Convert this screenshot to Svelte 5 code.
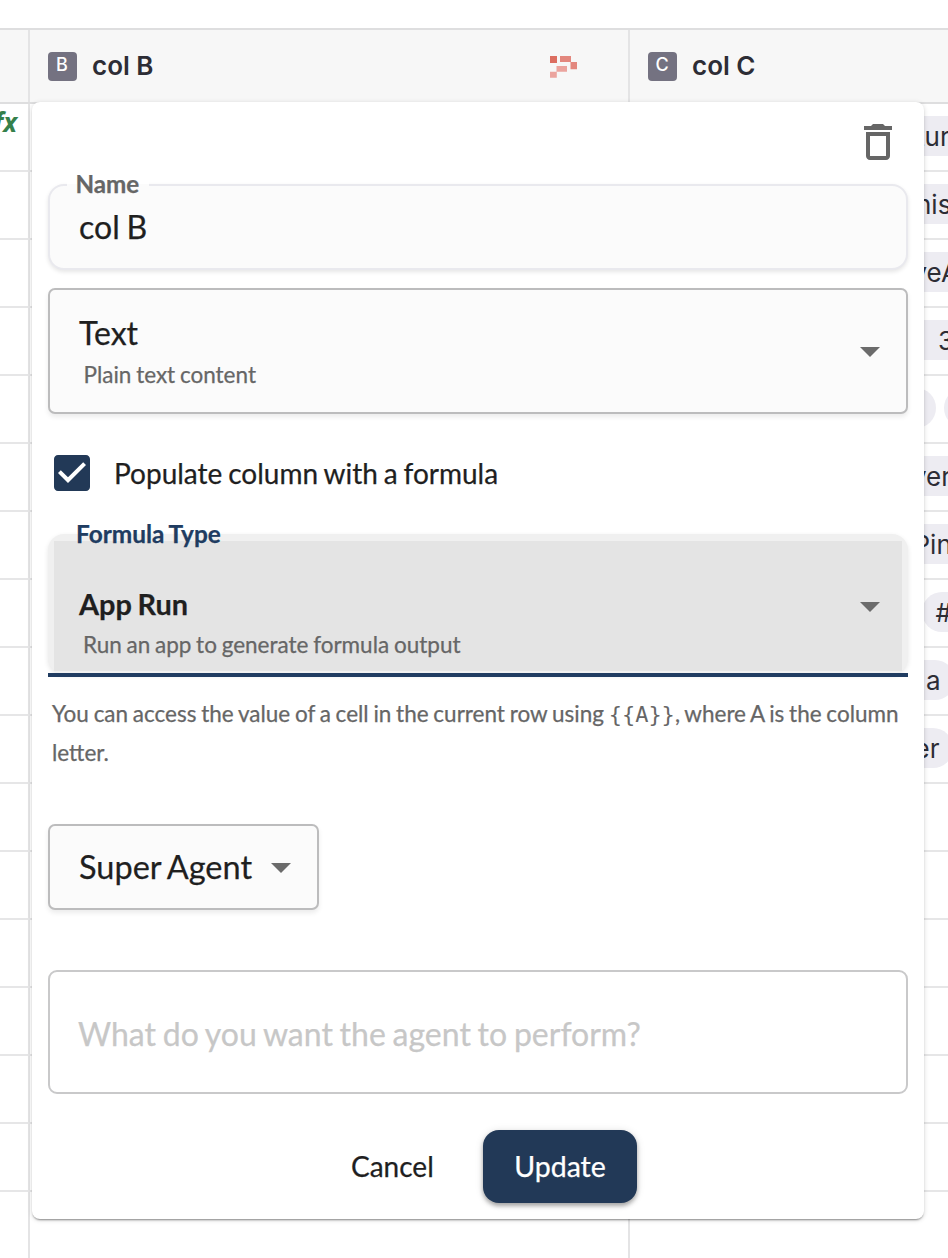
<script>
  const rows = [
    { chips: [{ text: 'tur', offset: 286 }] },
    { chips: [{ text: 'his', offset: 286 }] },
    { chips: [{ text: 'veA', offset: 282.5 }] },
    { chips: [{ text: '3', offset: 308 }] },
    { pair: true },
    { chips: [{ text: 'ver', offset: 282 }] },
    { chips: [{ text: 'Pin', offset: 283.5 }] },
    { start: 292, chips: [{ text: '#', offset: 305.5 }] },
    { chips: [{ text: 'a', offset: 296, end: true }] },
    { chips: [{ text: 'er', offset: 284.5, end: true }] },
    {}, {}, {}, {}, {}, {}, {}
  ];
</script>

{#snippet arrow()}
  <svg class="arrow" viewBox="0 0 24 24"><path d="M7 10l5 5 5-5z" /></svg>
{/snippet}

<div class="page">
  <div class="sheet">
    <div class="row head">
      <div class="num"></div>
      <div class="col b">
        <span class="badge">B</span><b>col B</b>
        <svg class="logo" viewBox="0 0 27 22">
          <path fill="#dc6e61" d="M0 0h7v7H0z" />
          <path fill="#e3877e" d="M10 0h11v6H10zM20.5 6H27v7.300h-6.500z" />
          <path fill="#eba49e" d="M6.500 10H17v5.700H6.500zM0 15.700h6.800v6H0z" />
        </svg>
      </div>
      <div class="col c"><span class="badge">C</span><b>col C</b></div>
    </div>
    {#each rows as row, i}
      <div class="row">
        <div class="num">{#if i === 0}<i>fx</i>{/if}</div>
        <div class="col b"></div>
        <div class="col c">
          {#if row.pair}
            <span class="chip round first"></span><span class="chip round"></span>
          {:else if row.chips}
            {#each row.chips as chip}
              <span
                class="chip"
                class:end={chip.end}
                class:start={row.start}
                style:margin-left="{row.start ?? 240}px"
                style:padding-left="{chip.offset - (row.start ?? 240)}px">{chip.text}</span>
            {/each}
          {/if}
        </div>
      </div>
    {/each}
  </div>

  <section class="card">
    <div class="tools">
      <svg class="trash" viewBox="0 0 24 24"><path d="M6 19c0 1.100.9 2 2 2h8c1.100 0 2-.9 2-2V7H6v12zM8 9h8v10H8V9zm7.500-5l-1-1h-5l-1 1H5v2h14V4h-3.500z" /></svg>
    </div>
    <div class="field name">
      <span class="label">Name</span>
      <span class="value">col B</span>
    </div>
    <div class="field select type">
      <div>
        <div class="value">Text</div>
        <div class="hint">Plain text content</div>
      </div>
      {@render arrow()}
    </div>
    <div class="check">
      <svg viewBox="0 0 24 24"><path d="M19 3H5c-1.110 0-2 .9-2 2v14c0 1.100.89 2 2 2h14c1.110 0 2-.9 2-2V5c0-1.100-.89-2-2-2zm-9 14l-5-5 1.410-1.410L10 14.170l7.590-7.590L19 8l-9 9z" /></svg>
      <span>Populate column with a formula</span>
    </div>
    <div class="formula">
      <span class="label">Formula Type</span>
      <div class="inner">
        <div>
          <div class="value">App Run</div>
          <div class="hint">Run an app to generate formula output</div>
        </div>
        {@render arrow()}
      </div>
    </div>
    <p class="help">You can access the value of a cell in the current row using <code>{'{{A}}'}</code>, where A is the column letter.</p>
    <div class="field select agent">
      <span class="value">Super Agent</span>
      {@render arrow()}
    </div>
    <div class="prompt">What do you want the agent to perform?</div>
    <div class="actions">
      <span class="cancel">Cancel</span>
      <span class="update">Update</span>
    </div>
  </section>
</div>

<style>
  :global(body) { background: #fff; }
  .page {
    position: relative;
    width: 948px;
    height: 1258px;
    overflow: hidden;
    box-sizing: border-box;
    padding-top: 28px;
    font-family: Lato, sans-serif;
    color: #1f1f1f;
  }
  .page * { box-sizing: border-box; }
  .sheet { border-top: 2px solid #dededf; font-family: Inter, sans-serif; color: #2d2d35; }
  .row { display: flex; height: 68px; border-bottom: 2px solid #e6e6e7; }
  .row:last-child { height: 70px; }
  .head { height: 74px; background: #f7f7f7; border-bottom-color: #dededf; }
  .num { flex: none; width: 30px; border-right: 2px solid #e4e4e5; overflow: hidden; }
  .num i {
    display: block;
    margin: 3px 0 0 -6.500px;
    font: italic 700 26px/30px "Open Sans", sans-serif;
    color: #35804b;
  }
  .col { display: flex; align-items: center; flex: none; overflow: hidden; }
  .b { width: 600px; border-right: 2px solid #e4e4e5; }
  .c { width: 318px; }
  .head .col { padding-left: 17.5px; }
  .head .b { padding-right: 51px; }
  .badge {
    width: 29px;
    height: 29px;
    border-radius: 4px;
    background: #747281;
    color: #fff;
    font-size: 18px;
    font-weight: 500;
    line-height: 26px;
    text-align: center;
  }
  .head b { margin-left: 15.5px; font-size: 26px; font-weight: 600; line-height: 30px; }
  .logo { width: 27px; height: 22px; margin: 2px 0 0 auto; }
  .chip {
    flex: none;
    height: 40px;
    width: 200px;
    margin-top: -2px;
    background: #edecf2;
    font-size: 26px;
    line-height: 41px;
    white-space: nowrap;
  }
  .chip.end { width: auto; padding-right: 14px; border-radius: 0 20px 20px 0; }
  .chip.start { border-radius: 20px; }
  .round { width: 66px; border-radius: 20px; }
  .round.first { margin-left: 240px; margin-right: 8px; }

  .card {
    position: absolute;
    z-index: 0;
    left: 32px;
    top: 102px;
    width: 892px;
    height: 1117px;
    padding: 16px 16px 0;
    border-radius: 8px;
    background: #fff;
    box-shadow: 0 2px 2px -1px rgba(0, 0, 0, .4), 0 1px 5px rgba(0, 0, 0, .16);
    -webkit-text-stroke: .25px currentColor;
  }
  .card * { word-spacing: -.045em; }
  .tools { display: flex; justify-content: flex-end; height: 66px; padding-right: 6px; }
  svg { display: block; flex: none; }
  .trash { width: 48px; height: 48px; fill: #666; }
  .arrow { width: 48px; height: 48px; fill: #6b6b6b; }
  .field {
    display: flex;
    border: 2px solid #bcbcbd;
    border-radius: 7px;
    background: #fbfbfb;
    box-shadow: 0 3px 5px rgba(0, 0, 0, .08);
  }
  .name {
    position: relative;
    height: 86px;
    border-color: #e9e9ee;
    border-radius: 16px;
    padding: 20px 29px;
    box-shadow: 0 2px 4px rgba(0, 0, 0, .1);
  }
  .label {
    position: absolute;
    left: 16.500px;
    top: -17px;
    padding: 0 10px 0 9px;
    font-size: 24.200px;
    font-weight: 700;
    line-height: 30px;
    color: #666;
  }
  .name .label { background: linear-gradient(#fff 0 15px, #fbfbfb 15px); }
  .value { font-size: 32px; line-height: 42px; }
  .hint { margin-left: 4px; font-size: 22.500px; line-height: 42px; color: #666; white-space: nowrap; }
  .select { align-items: center; justify-content: space-between; padding: 0 12px 0 29px; }
  .type { height: 126px; margin-top: 18px; }
  .type .value { margin-top: 6px; }
  .type .hint { margin-left: 4.500px; }
  .check { display: flex; align-items: center; height: 48px; margin-top: 35px; }
  .check svg { width: 48px; height: 48px; fill: #223957; }
  .check span { margin-left: 18px; font-size: 28px; }
  .formula {
    position: relative;
    height: 143px;
    margin-top: 37px;
    padding: 7px 6px 2px;
    border-bottom: 4px solid #203c61;
  }
  .formula::before {
    content: "";
    position: absolute;
    inset: 0 0 -1px;
    border-radius: 16px;
    background: #f0f0f0;
    box-shadow: 0 2px 5px rgba(0, 0, 0, .1);
    z-index: -1;
  }
  .formula .label { left: 19px; top: -15px; color: #203c61; font-size: 24.400px; }
  .inner {
    display: flex;
    align-items: center;
    justify-content: space-between;
    height: 130px;
    padding: 0 8px 0 25px;
    background: #e4e4e4;
  }
  .inner .value { margin-top: 37px; font-size: 28.900px; font-weight: 700; line-height: 40px; }
  .inner .hint { line-height: 41px; }
  .help { margin: 17px 4px 0; font-size: 22.500px; line-height: 39px; color: #666; }
  .help code { font: 22px/20px "DejaVu Sans Mono", monospace; -webkit-text-stroke: 0; }
  .agent { width: 271px; height: 86px; margin-top: 52px; }
  .agent .value { font-size: 32.500px; }
  .prompt {
    height: 124px;
    margin-top: 60px;
    padding: 0 28px;
    border: 2px solid #c9c9ca;
    border-radius: 9px;
    font-size: 32px;
    line-height: 124px;
    color: #c7c7c7;
  }
  .actions { display: flex; align-items: center; margin: 36px 0 0 303px; font-size: 28px; }
  .cancel { width: 132px; margin-top: -2px; }
  .update {
    width: 154px;
    height: 73px;
    border-radius: 16px;
    background: #223957;
    color: #fff;
    font-size: 28.500px;
    line-height: 73px;
    text-align: center;
    box-shadow: 0 3px 4px rgba(0, 0, 0, .3), 0 1px 8px rgba(0, 0, 0, .12);
  }
</style>
